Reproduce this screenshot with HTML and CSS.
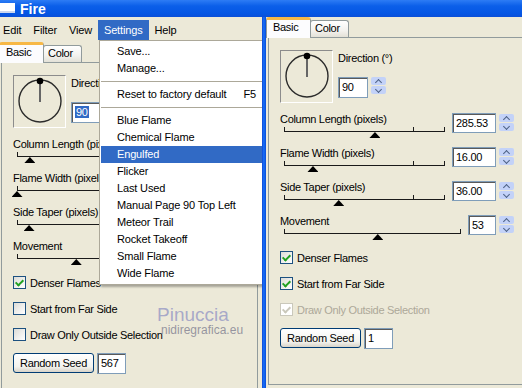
FILE: index.html
```html
<!DOCTYPE html>
<html lang="en">
  <head>
    <meta charset="UTF-8" />
    <title>Fire</title>
    <link rel="stylesheet" href="styles.css">
  </head>
  <body>
    <div class="titlebar">
      <span class="app-icon"></span>
      <span class="title">Fire</span>
    </div>

    <div class="desktop">
      <!-- Left: the dialog with the Settings menu open -->
      <div class="window main-window">
        <div class="menubar">
          <span class="menu-item">Edit</span>
          <span class="menu-item">Filter</span>
          <span class="menu-item">View</span>
          <span class="menu-item open">Settings</span>
          <span class="menu-item">Help</span>
        </div>

        <div class="panel">
          <div class="tabbar">
            <span class="tab active">Basic</span>
            <span class="tab">Color</span>
          </div>
          <div class="tabpage">
            <div class="direction">
              <div class="dial">
                <svg width="51" height="51" viewBox="0 0 51 51">
                  <circle cx="26" cy="25" r="21" fill="none" stroke="#2b2b2b" stroke-width="1.4" />
                  <line x1="26" y1="5" x2="26" y2="26" stroke="#666" stroke-width="2" />
                  <circle cx="26" cy="5" r="3.3" fill="#000" />
                </svg>
              </div>
              <div class="dir-fields">
                <div class="label">Direction (°)</div>
                <div class="field">
                  <span class="edit dir-edit"><span class="sel">90</span></span>
                  <span class="spin"><i class="up"></i><i class="down"></i></span>
                </div>
              </div>
            </div>

            <div class="params">
              <div class="param">
                <div class="param-main">
                  <div class="label">Column Length (pixels)</div>
                  <div class="slider">
                    <i class="tick first"></i><i class="tick mid"></i><i class="tick last"></i>
                    <i class="thumb" style="left: 8%"></i>
                  </div>
                </div>
                <span class="edit num">40.00</span>
                <span class="spin"><i class="up"></i><i class="down"></i></span>
              </div>
              <div class="param">
                <div class="param-main">
                  <div class="label">Flame Width (pixels)</div>
                  <div class="slider">
                    <i class="tick first"></i><i class="tick mid"></i><i class="tick last"></i>
                    <i class="thumb" style="left: 0%"></i>
                  </div>
                </div>
                <span class="edit num">1.00</span>
                <span class="spin"><i class="up"></i><i class="down"></i></span>
              </div>
              <div class="param">
                <div class="param-main">
                  <div class="label">Side Taper (pixels)</div>
                  <div class="slider">
                    <i class="tick first"></i><i class="tick mid"></i><i class="tick last"></i>
                    <i class="thumb" style="left: 7.5%"></i>
                  </div>
                </div>
                <span class="edit num">8.00</span>
                <span class="spin"><i class="up"></i><i class="down"></i></span>
              </div>
              <div class="param">
                <div class="param-main">
                  <div class="label">Movement</div>
                  <div class="slider">
                    <i class="tick first"></i><i class="tick last"></i>
                    <i class="thumb" style="left: 33.5%"></i>
                  </div>
                </div>
                <span class="edit num short">33</span>
                <span class="spin"><i class="up"></i><i class="down"></i></span>
              </div>
            </div>

            <div class="options">
              <div class="check"><span class="box on"></span>Denser Flames</div>
              <div class="check"><span class="box"></span>Start from Far Side</div>
              <div class="check"><span class="box"></span>Draw Only Outside Selection</div>
            </div>

            <div class="seed">
              <span class="button">Random Seed</span>
              <span class="edit seed-edit">567</span>
            </div>
          </div>
        </div>

        <div class="dropdown">
          <div class="dropdown-item">Save...</div>
          <div class="dropdown-item">Manage...</div>
          <div class="separator"></div>
          <div class="dropdown-item">Reset to factory default<span class="key">F5</span></div>
          <div class="separator"></div>
          <div class="dropdown-item">Blue Flame</div>
          <div class="dropdown-item">Chemical Flame</div>
          <div class="dropdown-item hover">Engulfed</div>
          <div class="dropdown-item">Flicker</div>
          <div class="dropdown-item">Last Used</div>
          <div class="dropdown-item">Manual Page 90 Top Left</div>
          <div class="dropdown-item">Meteor Trail</div>
          <div class="dropdown-item">Rocket Takeoff</div>
          <div class="dropdown-item">Small Flame</div>
          <div class="dropdown-item">Wide Flame</div>
        </div>

        <div class="watermark">
          <div class="name">Pinuccia</div>
          <div class="site">nidiregrafica.eu</div>
        </div>
      </div>

      <!-- Right: the same dialog with the Engulfed preset applied -->
      <div class="window side-window">
        <div class="panel">
          <div class="tabbar">
            <span class="tab active">Basic</span>
            <span class="tab">Color</span>
          </div>
          <div class="tabpage">
            <div class="direction">
              <div class="dial">
                <svg width="51" height="51" viewBox="0 0 51 51">
                  <circle cx="26" cy="25" r="21" fill="none" stroke="#2b2b2b" stroke-width="1.4" />
                  <line x1="26" y1="5" x2="26" y2="26" stroke="#666" stroke-width="2" />
                  <circle cx="26" cy="5" r="3.3" fill="#000" />
                </svg>
              </div>
              <div class="dir-fields">
                <div class="label">Direction (°)</div>
                <div class="field">
                  <span class="edit dir-edit">90</span>
                  <span class="spin"><i class="up"></i><i class="down"></i></span>
                </div>
              </div>
            </div>

            <div class="params">
              <div class="param">
                <div class="param-main">
                  <div class="label">Column Length (pixels)</div>
                  <div class="slider">
                    <i class="tick first"></i><i class="tick mid"></i><i class="tick last"></i>
                    <i class="thumb" style="left: 56.5%"></i>
                  </div>
                </div>
                <span class="edit num">285.53</span>
                <span class="spin"><i class="up"></i><i class="down"></i></span>
              </div>
              <div class="param">
                <div class="param-main">
                  <div class="label">Flame Width (pixels)</div>
                  <div class="slider">
                    <i class="tick first"></i><i class="tick mid"></i><i class="tick last"></i>
                    <i class="thumb" style="left: 18%"></i>
                  </div>
                </div>
                <span class="edit num">16.00</span>
                <span class="spin"><i class="up"></i><i class="down"></i></span>
              </div>
              <div class="param">
                <div class="param-main">
                  <div class="label">Side Taper (pixels)</div>
                  <div class="slider">
                    <i class="tick first"></i><i class="tick mid"></i><i class="tick last"></i>
                    <i class="thumb" style="left: 34%"></i>
                  </div>
                </div>
                <span class="edit num">36.00</span>
                <span class="spin"><i class="up"></i><i class="down"></i></span>
              </div>
              <div class="param">
                <div class="param-main">
                  <div class="label">Movement</div>
                  <div class="slider">
                    <i class="tick first"></i><i class="tick last"></i>
                    <i class="thumb" style="left: 53%"></i>
                  </div>
                </div>
                <span class="edit num short">53</span>
                <span class="spin"><i class="up"></i><i class="down"></i></span>
              </div>
            </div>

            <div class="options">
              <div class="check"><span class="box on"></span>Denser Flames</div>
              <div class="check"><span class="box on"></span>Start from Far Side</div>
              <div class="check disabled"><span class="box on"></span>Draw Only Outside Selection</div>
            </div>

            <div class="seed">
              <span class="button">Random Seed</span>
              <span class="edit seed-edit">1</span>
            </div>
          </div>
        </div>
      </div>
    </div>
  </body>
</html>
```

FILE: styles.css
```css
* {
  box-sizing: border-box;
}

body {
  margin: 0;
  width: 522px;
  height: 388px;
  overflow: hidden;
  background: #ece9d8;
  font-family: "Liberation Sans", Arial, sans-serif;
  font-size: 11px;
  color: #000;
}

/* Title bar */
.titlebar {
  height: 17px;
  display: flex;
  align-items: center;
  background: linear-gradient(#2d7cf5, #0b5fe9 35%, #0556e4 80%, #0a4fd8);
  color: #fff;
}

.app-icon {
  width: 15px;
  height: 10px;
  margin-top: -1px;
  background: #fff;
  border-bottom: 2px solid #cbd6ef;
}

.title {
  margin-left: 5px;
  font-size: 14px;
  font-weight: bold;
}

.desktop {
  display: flex;
  height: 371px;
}

.window {
  position: relative;
  overflow: hidden;
  background: #ece9d8;
}

.main-window {
  width: 262px;
}

.side-window {
  flex: 1;
  padding-left: 4px;
  background: linear-gradient(to right, #0839c9, #1a6cf3 1px, #0f62ee 3px, #0845d2 4px) 0 0 / 4px 100% no-repeat, #ece9d8;
}

/* Menu bar */
.menubar {
  display: flex;
  height: 23px;
  padding-top: 3px;
}

.menu-item {
  height: 20px;
  line-height: 20px;
  padding: 0 6px;
  letter-spacing: -0.15px;
}

.menu-item:first-child {
  padding-left: 3px;
}

.menu-item.open {
  background: #316ac5;
  color: #fff;
}

/* Tabs */
.panel {
  width: 259px;
}

.main-window .panel {
  margin: 2px 0 0 -1px;
}

.tabbar {
  display: flex;
  align-items: flex-end;
  height: 20px;
  position: relative;
  z-index: 1;
}

.tab {
  width: 39px;
  height: 17px;
  margin-left: -1px;
  padding: 1px 0 0 4px;
  line-height: 13px;
  border: 1px solid #919b9c;
  border-bottom: none;
  border-radius: 3px 3px 0 0;
  background: linear-gradient(#fff, #f3f2ee 60%, #e3e1d7);
  letter-spacing: -0.3px;
}

.tab.active {
  width: 45px;
  height: 21px;
  margin: 0 0 -1px 0;
  padding: 1px 0 0 6px;
  border-top: 3px solid #f7b846;
  background: #fcfcfe;
}

.tabpage {
  width: 257px;
  height: 348px;
  margin-left: 2px;
  padding: 12px 10px 0 11px;
  border: 1px solid #919b9c;
  background: #ece9d8;
}

.label {
  line-height: 13px;
  letter-spacing: -0.3px;
  white-space: nowrap;
}

/* Direction dial */
.direction {
  display: flex;
  gap: 5px;
}

.dial {
  width: 53px;
  height: 53px;
  border: 1px solid;
  border-color: #8c8c8c #fff #fff #8c8c8c;
}

.dial svg {
  display: block;
}

.dir-fields {
  padding-top: 2px;
}

.field {
  display: flex;
  gap: 3px;
  margin-top: 12px;
}

/* Edit boxes and spinners */
.edit {
  display: block;
  height: 20px;
  line-height: 18px;
  padding-left: 3px;
  border: 1px solid #7f9db9;
  background: #fff;
  box-shadow: inset 1px 1px 0 #5a5a5a;
  letter-spacing: -0.3px;
  white-space: nowrap;
}

.edit .sel {
  padding: 0 1px;
  background: #316ac5;
  color: #fff;
}

.dir-edit {
  width: 30px;
  height: 21px;
}

.num {
  width: 44px;
}

.num.short {
  width: 28px;
}

.spin {
  display: flex;
  flex-direction: column;
  gap: 1px;
  width: 15px;
  height: 17px;
}

.spin i {
  flex: 1;
  display: flex;
  align-items: center;
  justify-content: center;
  background: #c3d2f8;
  border-radius: 2px;
}

.spin i::before {
  content: "";
  width: 4px;
  height: 4px;
  border-top: 1.5px solid #4d6185;
  border-left: 1.5px solid #4d6185;
}

.spin .up::before {
  transform: translateY(1px) rotate(45deg);
}

.spin .down::before {
  transform: translateY(-1px) rotate(-135deg);
}

/* Slider rows */
.params {
  margin-top: 10px;
}

.param {
  display: flex;
  align-items: flex-start;
  height: 34px;
}

.param-main {
  flex: 1;
}

.param .edit {
  margin-left: 7px;
}

.param .spin {
  margin: 1px 0 0 3px;
}

.slider {
  position: relative;
  height: 21px;
  margin-left: 4px;
}

.slider::before {
  content: "";
  position: absolute;
  left: 0;
  right: 0;
  top: 5px;
  height: 1px;
  background: #1a1a1a;
}

.tick {
  position: absolute;
  top: 1px;
  width: 1px;
  height: 5px;
  background: #1a1a1a;
}

.tick.first {
  left: 0;
}

.tick.mid {
  left: 80%;
}

.tick.last {
  right: 0;
}

.thumb {
  position: absolute;
  top: 6px;
  width: 11px;
  height: 6px;
  margin-left: -5.5px;
  background: #000;
  clip-path: polygon(50% 0, 100% 100%, 0 100%);
}

/* Check boxes */
.options {
  display: flex;
  flex-direction: column;
  gap: 13px;
  margin-top: 2px;
}

.check {
  display: flex;
  align-items: center;
  gap: 4px;
  height: 13px;
  letter-spacing: -0.3px;
  white-space: nowrap;
}

.box {
  display: flex;
  align-items: center;
  justify-content: center;
  flex: none;
  width: 13px;
  height: 13px;
  border: 1px solid #1c5180;
  background: linear-gradient(135deg, #dcdcd7, #fff);
}

.box.on::after {
  content: "";
  width: 3px;
  height: 6px;
  border: solid #21a121;
  border-width: 0 2px 2px 0;
  transform: translateY(-1px) rotate(45deg);
}

.check.disabled {
  color: #aca899;
}

.check.disabled .box {
  border-color: #cac8bb;
  background: #fff;
}

.check.disabled .box::after {
  border-color: #cac8bb;
}

/* Random seed */
.seed {
  display: flex;
  gap: 3px;
  margin-top: 12px;
}

.button {
  width: 81px;
  height: 20px;
  line-height: 18px;
  text-align: center;
  border: 1px solid #003c74;
  border-radius: 3px;
  background: linear-gradient(#fff, #f3f3ee 70%, #d8d3c8);
  letter-spacing: -0.3px;
}

.seed-edit {
  width: 29px;
  height: 21px;
  line-height: 19px;
}

/* Settings menu */
.dropdown {
  position: absolute;
  left: 99px;
  top: 23px;
  width: 168px;
  padding: 2px 0;
  background: #fff;
  border: 1px solid #aca899;
  box-shadow: 2px 2px 2px rgba(0, 0, 0, 0.3);
  z-index: 2;
}

.dropdown-item {
  display: flex;
  height: 17px;
  line-height: 17px;
  margin: 0 1px;
  padding: 0 9px 0 16px;
  letter-spacing: -0.15px;
  white-space: nowrap;
}

.dropdown-item .key {
  margin-left: auto;
}

.dropdown-item.hover {
  background: #316ac5;
  color: #fff;
}

.separator {
  height: 9px;
  padding-top: 4px;
  margin: 0 1px;
}

.separator::before {
  content: "";
  display: block;
  height: 1px;
  background: #aca899;
}

/* Watermark over the dialog */
.watermark {
  position: absolute;
  left: 157px;
  top: 288px;
  z-index: 1;
}

.watermark .name {
  font-size: 19px;
  line-height: 19px;
  color: rgba(150, 152, 196, 0.8);
}

.watermark .site {
  margin-left: 4px;
  font-size: 12px;
  line-height: 13px;
  color: rgba(120, 120, 140, 0.75);
}
```
